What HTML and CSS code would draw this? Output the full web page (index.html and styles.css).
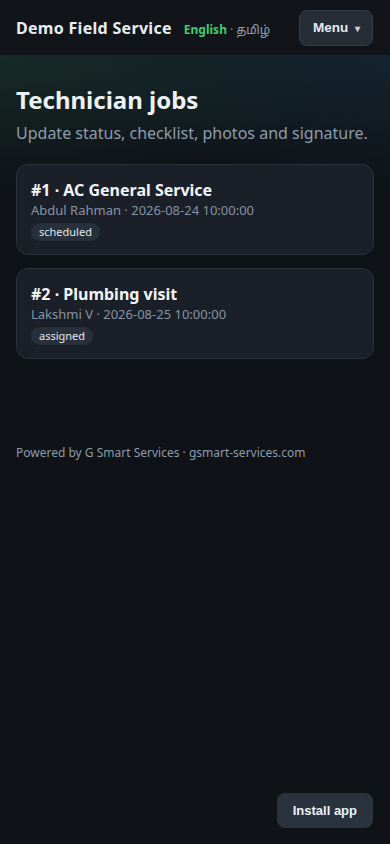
FILE: index.html
```html
<!DOCTYPE html>
<html lang="en">
<head>
    <meta charset="UTF-8">
    <meta name="viewport" content="width=device-width, initial-scale=1.0">
    <title>Demo Field Service</title>
    <link rel="stylesheet" href="styles.css">
</head>
<body>
    <header class="topbar">
        <div class="brand">
            <span class="brand-name">Demo Field Service</span>
            <span class="lang">
                <a href="#" class="lang-active">English</a>
                <span class="lang-sep">·</span>
                <a href="#" class="lang-other">தமிழ்</a>
            </span>
        </div>
        <button type="button" class="menu-btn">Menu <span class="caret">▾</span></button>
    </header>

    <main class="page">
        <section class="hero">
            <h1>Technician jobs</h1>
            <p class="lead">Update status, checklist, photos and signature.</p>
        </section>

        <!-- job list -->
        <section class="jobs">
            <a href="#" class="job-card">
                <h2>#1 · AC General Service</h2>
                <div class="job-meta">Abdul Rahman · 2026-08-24 10:00:00</div>
                <span class="badge">scheduled</span>
            </a>
            <a href="#" class="job-card">
                <h2>#2 · Plumbing visit</h2>
                <div class="job-meta">Lakshmi V · 2026-08-25 10:00:00</div>
                <span class="badge">assigned</span>
            </a>
        </section>

        <footer class="powered">
            Powered by G Smart Services · gsmart-services.com
        </footer>
    </main>

    <button type="button" class="install-btn">Install app</button>
</body>
</html>
```

FILE: styles.css
```css
body {
    margin: 0;
    padding: 0;
    font-family: "Noto Sans", "Noto Sans Tamil", sans-serif;
    background-color: #0f1317;
    color: #e6ebf1;
    min-height: 844px;
}

a {
    text-decoration: none;
    color: inherit;
}

.topbar {
    height: 56px;
    box-sizing: border-box;
    padding: 0 16px;
    display: flex;
    align-items: center;
    justify-content: space-between;
    background-color: #111519;
    border-bottom: 1px solid #1b2228;
}

.brand {
    display: flex;
    align-items: baseline;
    gap: 12px;
}

.brand-name {
    font-size: 16px;
    font-weight: 700;
    color: #e8edf2;
    letter-spacing: 0.3px;
}

.lang {
    font-size: 12px;
}

.lang-active {
    color: #3ccf6e;
    font-weight: 700;
}

.lang-sep {
    color: #8a96a5;
}

.lang-other {
    color: #9aa6b4;
}

.menu-btn {
    font-family: "Liberation Sans", Arial, sans-serif;
    font-size: 13.5px;
    font-weight: 700;
    color: #e6ebf1;
    background-color: #262d37;
    border: 1px solid #343c48;
    border-radius: 8px;
    height: 36px;
    padding: 0 12px 0 13px;
    margin-right: 1px;
    cursor: pointer;
}

.caret {
    font-size: 10px;
    color: #c8d0da;
    margin-left: 3px;
}

.page {
    background:
        radial-gradient(ellipse 90% 130px at 0 0, rgba(28, 62, 52, 0.55), transparent),
        radial-gradient(ellipse 90% 130px at 100% 0, rgba(24, 50, 68, 0.55), transparent),
        #0f1317;
    padding: 0 16px;
}

.hero {
    padding-top: 28px;
}

.hero h1 {
    margin: 0;
    font-size: 24px;
    font-weight: 700;
    line-height: 32px;
    color: #eef2f6;
}

.lead {
    margin: 5px 0 0;
    font-size: 16px;
    line-height: 24px;
    color: #8e9cad;
}

.jobs {
    margin-top: 19px;
    display: flex;
    flex-direction: column;
    gap: 13px;
}

.job-card {
    display: block;
    background-color: #1b2028;
    border: 1px solid #2a313b;
    border-radius: 12px;
    padding: 14px 14px 14px;
    height: 91px;
    box-sizing: border-box;
}

.job-card h2 {
    margin: 0;
    font-size: 16px;
    line-height: 22px;
    font-weight: 700;
    color: #f1f4f8;
}

.job-meta {
    font-size: 13px;
    line-height: 18px;
    color: #8593a4;
}

.badge {
    display: inline-block;
    margin-top: 3px;
    font-size: 11px;
    line-height: 18px;
    padding: 0 8px;
    border-radius: 999px;
    background-color: #28303b;
    color: #e3e8ee;
}

.powered {
    margin-top: 85px;
    font-size: 12px;
    color: #8e9bab;
    padding-bottom: 20px;
}

.install-btn {
    position: fixed;
    right: 17px;
    bottom: 16px;
    height: 35px;
    padding: 0 16px;
    font-family: "Liberation Sans", Arial, sans-serif;
    font-size: 13px;
    font-weight: 700;
    color: #eef2f6;
    background-color: #2a323e;
    border: none;
    border-radius: 8px;
    cursor: pointer;
}
```
